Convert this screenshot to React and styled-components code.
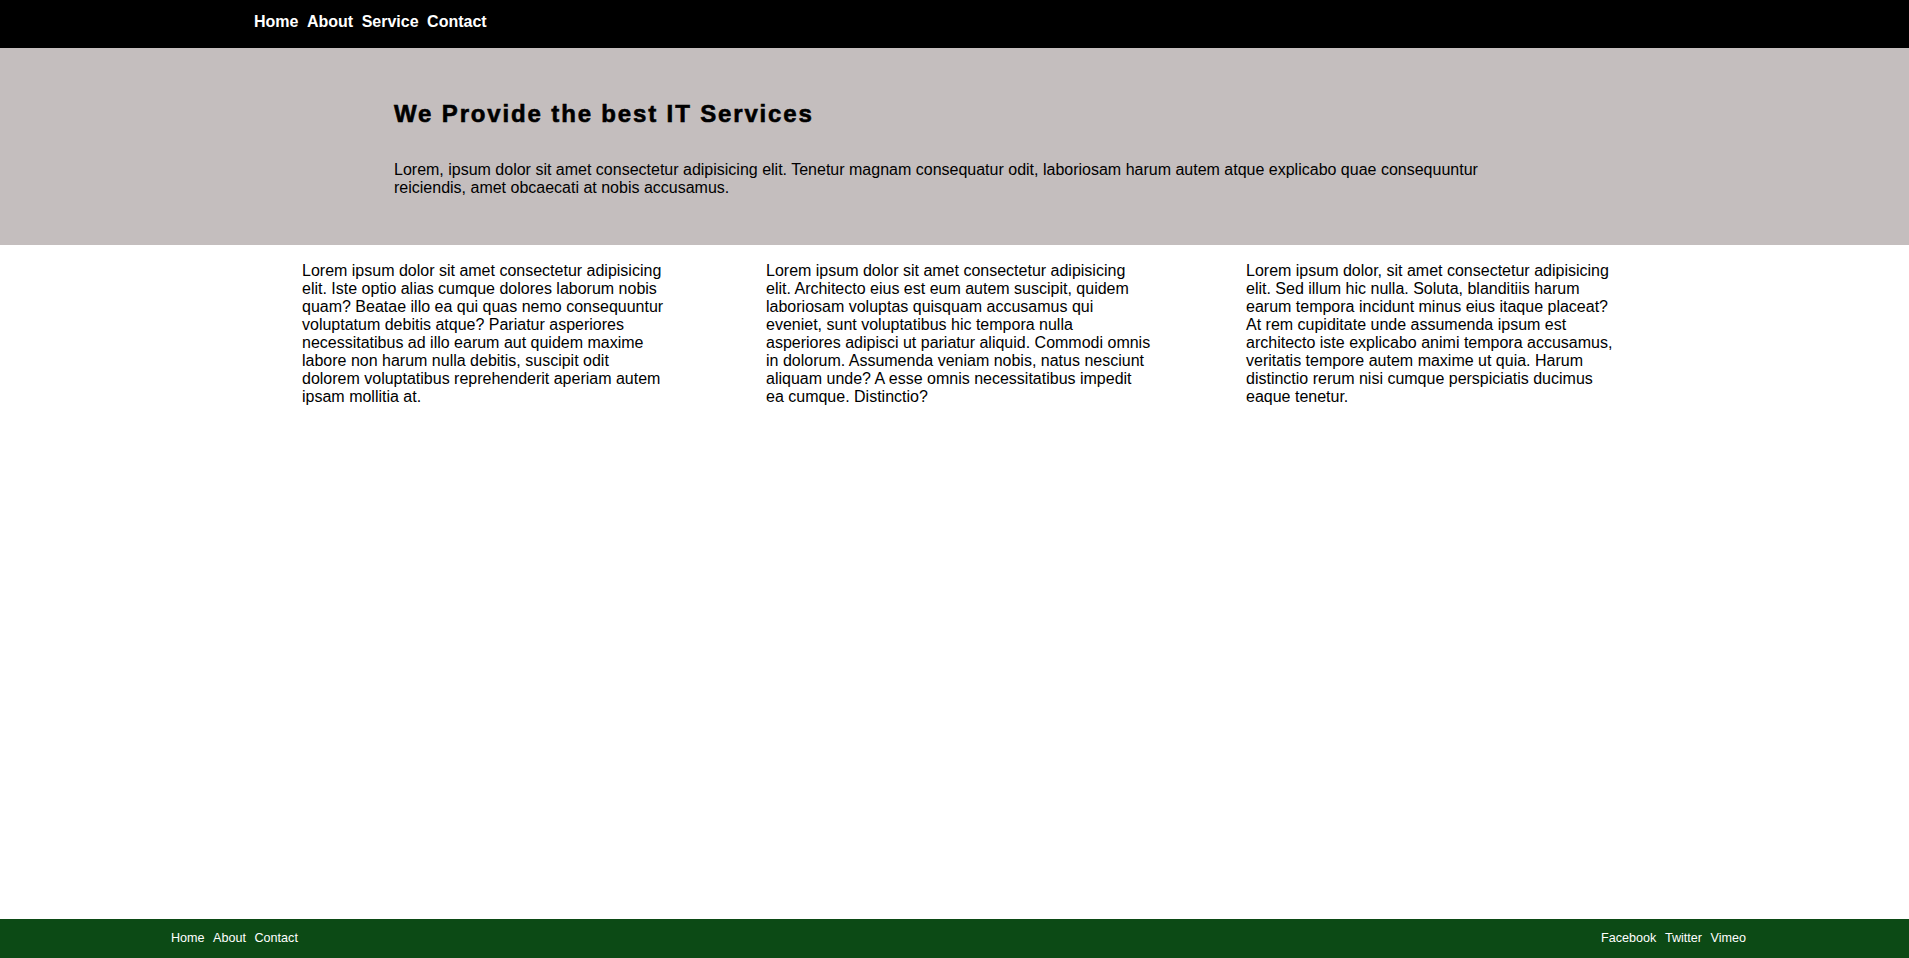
import React from "react";
import styled, { createGlobalStyle } from "styled-components";

const Global = createGlobalStyle`
  * { box-sizing: border-box; }
  html, body { margin: 0; padding: 0; }
  body { font-family: "Liberation Sans", Arial, sans-serif; color: #000; background: #fff; }
`;

const Page = styled.div`
  min-height: 100vh;
  display: flex;
  flex-direction: column;
`;

const Header = styled.header`
  background: #000;
  height: 48px;
  padding: 13px 0 0 254px;
`;

const NavList = styled.nav`
  display: flex;
  gap: ${(p) => p.$gap || "8.5px"};
`;

const NavLink = styled.a`
  color: #fff;
  font-size: ${(p) => (p.$small ? "12.6px" : "16px")};
  font-weight: ${(p) => (p.$small ? 400 : 700)};
  line-height: ${(p) => (p.$small ? "15px" : "18px")};
  text-decoration: none;
  white-space: nowrap;
`;

const Hero = styled.section`
  background: #c4bebe;
  padding: 52px 394px 48px;
`;

const Title = styled.h1`
  margin: 0 0 33px;
  font-size: 24px;
  line-height: 28px;
  font-weight: 700;
  letter-spacing: 1.85px;
  -webkit-text-stroke: 0.6px #000;
`;

const Lead = styled.p`
  margin: 0;
  font-size: 16px;
  line-height: 18px;
  max-width: 1121px;
`;

const Main = styled.main`
  flex: 1;
  display: grid;
  grid-template-columns: 464px 480px 380px;
  align-items: start;
  padding: 17px 0 0 302px;
`;

const Column = styled.p`
  margin: 0;
  width: ${(p) => p.$w}px;
  font-size: 16px;
  line-height: 18px;
`;

const Footer = styled.footer`
  background: #0c4a15;
  height: 39px;
  display: flex;
  align-items: center;
  justify-content: space-between;
  padding: 0 163px 0 171px;
`;

export default function App() {
  return (
    <Page>
      <Global />
      <Header>
        <NavList>
          <NavLink href="#">Home</NavLink>
          <NavLink href="#">About</NavLink>
          <NavLink href="#">Service</NavLink>
          <NavLink href="#">Contact</NavLink>
        </NavList>
      </Header>
      <Hero>
        <Title>We Provide the best IT Services</Title>
        <Lead>
          Lorem, ipsum dolor sit amet consectetur adipisicing elit. Tenetur magnam consequatur odit, laboriosam harum autem atque explicabo quae consequuntur reiciendis, amet obcaecati at nobis accusamus.
        </Lead>
      </Hero>
      <Main>
        <Column $w={362}>
          Lorem ipsum dolor sit amet consectetur adipisicing elit. Iste optio alias cumque dolores laborum nobis quam? Beatae illo ea qui quas nemo consequuntur voluptatum debitis atque? Pariatur asperiores necessitatibus ad illo earum aut quidem maxime labore non harum nulla debitis, suscipit odit dolorem voluptatibus reprehenderit aperiam autem ipsam mollitia at.
        </Column>
        <Column $w={385.5}>
          Lorem ipsum dolor sit amet consectetur adipisicing elit. Architecto eius est eum autem suscipit, quidem laboriosam voluptas quisquam accusamus qui eveniet, sunt voluptatibus hic tempora nulla asperiores adipisci ut pariatur aliquid. Commodi omnis in dolorum. Assumenda veniam nobis, natus nesciunt aliquam unde? A esse omnis necessitatibus impedit ea cumque. Distinctio?
        </Column>
        <Column $w={378}>
          Lorem ipsum dolor, sit amet consectetur adipisicing elit. Sed illum hic nulla. Soluta, blanditiis harum earum tempora incidunt minus eius itaque placeat? At rem cupiditate unde assumenda ipsum est architecto iste explicabo animi tempora accusamus, veritatis tempore autem maxime ut quia. Harum distinctio rerum nisi cumque perspiciatis ducimus eaque tenetur.
        </Column>
      </Main>
      <Footer>
        <NavList $gap="8.5px">
          <NavLink $small href="#">Home</NavLink>
          <NavLink $small href="#">About</NavLink>
          <NavLink $small href="#">Contact</NavLink>
        </NavList>
        <NavList $gap="8.5px">
          <NavLink $small href="#">Facebook</NavLink>
          <NavLink $small href="#">Twitter</NavLink>
          <NavLink $small href="#">Vimeo</NavLink>
        </NavList>
      </Footer>
    </Page>
  );
}
